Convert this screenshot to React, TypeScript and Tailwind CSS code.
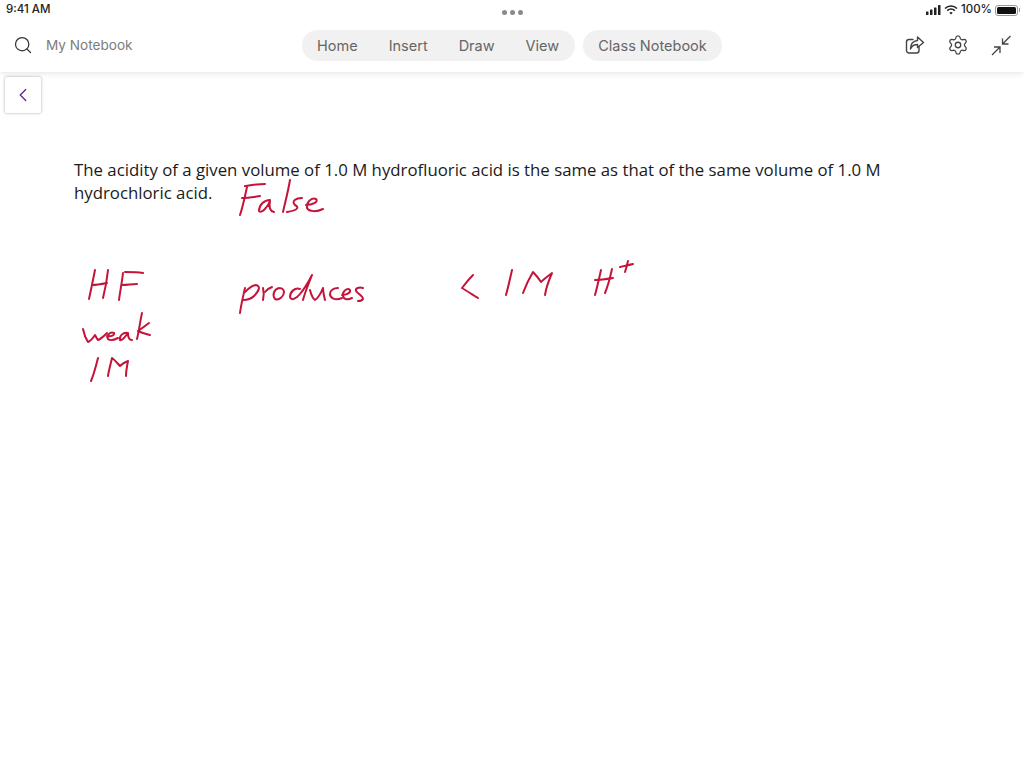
import { ChevronLeft, Search, Settings } from 'lucide-react';

const tabs = ['Home', 'Insert', 'Draw', 'View'];

// ink strokes, in page pixels
const inkStrokes = [
  // False
  'M247 187 C245 196 243 206 240 215',
  'M245 186 C252 185 258 184 265 184',
  'M242 198 C248 198 254 197 260 196',
  'M270 200 C264 200 259 205 259 211 C262 214 268 206 270 201 C269 206 269 211 274 212',
  'M290 180 C288 192 285 203 283 212',
  'M302 198 C296 198 291 201 295 205 C299 207 299 210 287 212',
  'M306 205 C312 205 319 202 316 199 C311 197 306 203 307 208 C309 212 317 212 323 209',
  // HF
  'M95 270 C93 280 91 290 89 299',
  'M108 270 C107 280 105 290 103 298',
  'M92 285 C97 285 102 284 107 283',
  'M123 273 C122 282 120 292 119 300',
  'M125 272 C131 272 137 272 143 273',
  'M122 285 C127 285 132 284 137 284',
  // weak
  'M83 329 C84 334 86 339 88 342 C91 341 93 338 95 335 C96 337 97 339 98 340 C101 339 104 336 107 333',
  'M107 336 C111 337 115 335 114 333 C110 331 106 336 108 339 C110 341 114 340 118 338',
  'M128 333 C123 332 119 336 120 340 C122 341 125 337 128 333 C128 337 129 340 132 340',
  'M142 313 C140 322 139 331 137 339',
  'M149 323 C145 326 141 329 138 331 C142 333 146 334 150 335',
  // 1M
  'M98 358 C96 366 94 374 91 381',
  'M108 376 C109 369 111 363 112 358 C115 360 118 364 120 366 C122 364 125 362 128 361 C127 366 126 371 126 376',
  // produces
  'M245 288 C243 297 241 305 240 313',
  'M245 292 C249 288 253 285 256 285 C261 286 259 291 254 296 C251 299 247 300 243 300',
  'M263 288 C264 292 264 296 263 300',
  'M265 292 C267 289 269 288 272 287',
  'M279 288 C274 289 272 295 275 299 C279 301 284 296 284 292 C284 289 281 288 279 288',
  'M300 289 C295 287 290 292 290 297 C291 301 296 299 300 294 C305 288 309 281 312 275 C309 283 305 292 303 300',
  'M310 290 C311 294 312 298 315 300 C318 298 321 293 323 288 C323 292 324 296 325 300',
  'M338 288 C334 288 330 290 330 294 C330 298 335 301 342 298',
  'M342 295 C346 295 351 293 350 290 C347 287 342 292 343 296 C344 300 348 300 352 298',
  'M363 288 C359 287 355 288 356 291 C358 294 363 296 363 299 C362 301 360 301 358 301',
  // < 1M
  'M473 275 C469 279 465 284 462 288 C467 291 473 295 478 298',
  'M512 270 C510 279 508 288 506 295',
  'M523 293 C526 285 530 277 533 272 C536 275 539 279 541 282 C544 279 548 276 552 273 C549 280 546 288 545 295',
  // H+
  'M601 270 C599 279 597 288 595 295',
  'M612 269 C610 278 608 286 605 293',
  'M595 280 C601 280 607 279 613 278',
  'M628 261 C627 265 626 269 625 272',
  'M620 267 C624 266 629 265 633 264',
];

export default function App() {
  return (
    <div className="relative h-[768px] w-[1024px] overflow-hidden bg-white font-['Inter',sans-serif]">
      <div className="relative z-10 bg-white shadow-[0_1px_6px_rgba(0,0,0,0.12)] h-[72px]">
        <div className="relative flex h-[18px] items-center justify-between pl-[6px] pr-[4px] pt-[2px] text-[11.5px] font-medium text-[#222]">
          <span>9:41 AM</span>
          <div className="absolute left-[502px] top-[10px] flex gap-[3px]">
            <span className="h-[5px] w-[5px] rounded-full bg-[#8a8a8a]" />
            <span className="h-[5px] w-[5px] rounded-full bg-[#8a8a8a]" />
            <span className="h-[5px] w-[5px] rounded-full bg-[#8a8a8a]" />
          </div>
          <div className="flex items-center gap-[3px]">
            <svg width="15" height="10" viewBox="0 0 15 10" fill="#222">
              <rect x="0" y="6.5" width="2.5" height="3.5" rx="0.5" />
              <rect x="4" y="4.5" width="2.5" height="5.5" rx="0.5" />
              <rect x="8" y="2.5" width="2.5" height="7.5" rx="0.5" />
              <rect x="12" y="0" width="2.5" height="10" rx="0.5" />
            </svg>
            <svg width="14" height="10" viewBox="0 0 14 10" fill="none" stroke="#222" strokeWidth="1.6">
              <path d="M1 3.5 C4.5 0.2 9.5 0.2 13 3.5" />
              <path d="M3.2 5.7 C5.5 3.6 8.5 3.6 10.8 5.7" />
              <path d="M7 9.5 L5.3 7.7 C6.3 6.9 7.7 6.9 8.7 7.7 Z" fill="#222" stroke="none" />
            </svg>
            <span>100%</span>
            <div className="flex items-center">
              <div className="h-[11px] w-[23px] rounded-[3px] border border-[#999] p-[1px]">
                <div className="h-full w-full rounded-[1.5px] bg-[#111]" />
              </div>
              <div className="ml-[1px] h-[4px] w-[1px] bg-[#999]" />
            </div>
          </div>
        </div>
        <div className="relative flex h-[54px] items-center">
          <Search className="ml-[13px] h-[20px] w-[20px] text-[#333]" strokeWidth={1.5} />
          <span className="ml-[13px] text-[13.6px] text-[#7c7c7c]">My Notebook</span>
          <div className="absolute left-[302px] top-[12px] flex h-[31px] items-center rounded-full bg-[#f1f1f1] pl-[15px] text-[14.5px] text-[#666] gap-[31px] w-[273px]">
            {tabs.map(tab => (
              <span key={tab}>{tab}</span>
            ))}
          </div>
          <div className="absolute left-[583px] top-[12px] flex h-[31px] w-[139px] items-center justify-center rounded-full bg-[#f1f1f1] text-[14.5px] text-[#666]">
            Class Notebook
          </div>
          <div className="ml-auto mr-[12px] flex items-center gap-[22px] text-[#444]">
            <svg width="20" height="20" viewBox="0 0 20 20" fill="none" stroke="currentColor" strokeWidth="1.4" strokeLinejoin="round" strokeLinecap="round">
              <path d="M14 11.5 V15.5 C14 17 13 18 11.5 18 H4 C2.5 18 1.5 17 1.5 15.5 V7 C1.5 5.5 2.5 4.5 4 4.5 H8" />
              <path d="M12.5 2 L18.5 7.5 L12.5 12.5 V9.5 C9.5 9.5 7 10.5 5.5 14 C5.5 9.5 8 6 12.5 5.5 Z" />
            </svg>
            <Settings className="h-[22px] w-[22px]" strokeWidth={1.4} />
            <svg width="21" height="21" viewBox="0 0 21 21" fill="none" stroke="currentColor" strokeWidth="1.3">
              <path d="M19.5 1 L11.5 9 M11.5 3.5 V9 H17.5" />
              <path d="M1 20 L9 12 M3 12 H9 V18" />
            </svg>
          </div>
        </div>
      </div>

      <div className="ml-[5px] mt-[5px] flex h-[36px] w-[36px] items-center justify-center rounded-[2px] bg-white shadow-[0_0_3px_rgba(0,0,0,0.35)]">
        <ChevronLeft className="h-[22px] w-[22px] text-[#6a1b9a]" strokeWidth={1.4} />
      </div>

      <p className="ml-[74px] mt-[45px] w-[830px] text-[16.8px] leading-[23px] text-[#1a1a1a] font-['Open_Sans',sans-serif]">
        The acidity of a given volume of 1.0 M hydrofluoric acid is the same as that of the same volume of 1.0 M hydrochloric acid.
      </p>

      {/* handwriting layer */}
      <svg className="absolute left-0 top-0" width="1024" height="768" fill="none" stroke="#c4143a" strokeWidth="2" strokeLinecap="round" strokeLinejoin="round">
        {inkStrokes.map((d, i) => (
          <path key={i} d={d} />
        ))}
      </svg>
    </div>
  );
}
